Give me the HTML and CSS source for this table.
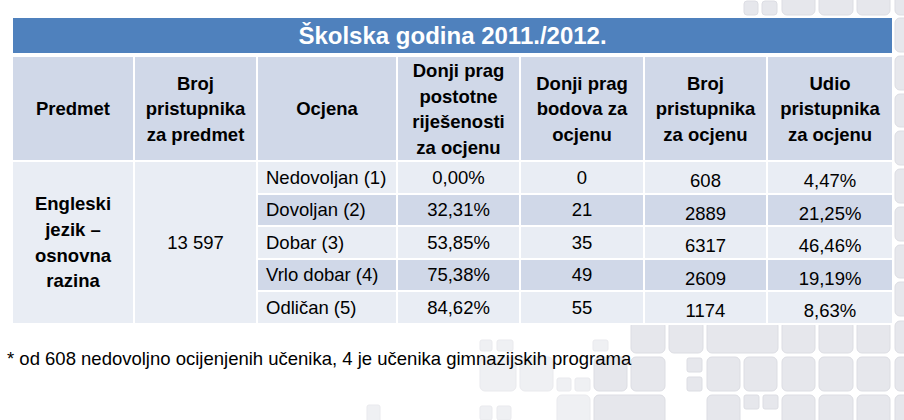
FILE: index.html
```html
<!DOCTYPE html>
<html lang="hr">
<head>
<meta charset="utf-8">
<title>Školska godina 2011./2012.</title>
<link rel="stylesheet" href="styles.css">
</head>
<body>
<div class="backdrop" aria-hidden="true">
  <svg width="904" height="420" viewBox="0 0 904 420">
    <g class="tiles">
      <rect x="744" y="1" width="14" height="14" rx="3"/>
      <rect x="762" y="1" width="15" height="14" rx="3"/>
      <rect x="782" y="-19" width="33" height="34" rx="5"/>
      <rect x="819" y="-19" width="34" height="34" rx="5"/>
      <rect x="857" y="-19" width="33" height="34" rx="5"/>
      <rect x="895" y="-19" width="33" height="34" rx="5"/>
      <rect x="895" y="18" width="33" height="34" rx="5"/>
      <rect x="895" y="56" width="33" height="34" rx="5"/>
      <rect x="895" y="94" width="33" height="33" rx="5"/>
      <rect x="895" y="131" width="33" height="34" rx="5"/>
      <rect x="895" y="169" width="33" height="34" rx="5"/>
      <rect x="895" y="207" width="33" height="34" rx="5"/>
      <rect x="895" y="245" width="33" height="33" rx="5"/>
      <rect x="895" y="282" width="33" height="34" rx="5"/>
      <!-- row A -->
      <rect class="faint" x="480" y="340" width="12" height="11" rx="2"/>
      <rect class="faint" x="497" y="340" width="16" height="11" rx="2"/>
      <rect class="faint" x="593" y="340" width="15" height="11" rx="2"/>
      <rect x="631" y="321" width="34" height="32" rx="5"/>
      <rect x="669" y="321" width="34" height="32" rx="5"/>
      <rect x="707" y="321" width="71" height="32" rx="5"/>
      <rect x="782" y="321" width="33" height="32" rx="5"/>
      <rect x="819" y="321" width="34" height="32" rx="5"/>
      <rect x="857" y="321" width="33" height="32" rx="5"/>
      <rect x="895" y="321" width="33" height="32" rx="5"/>
      <!-- row B -->
      <rect class="faint" x="480" y="357" width="36" height="34" rx="5"/>
      <rect class="faint" x="520" y="357" width="33" height="34" rx="5"/>
      <rect class="faint" x="557" y="378" width="14" height="13" rx="2"/>
      <rect class="faint" x="575" y="378" width="15" height="13" rx="2"/>
      <rect x="594" y="357" width="33" height="34" rx="5"/>
      <rect x="631" y="357" width="34" height="34" rx="5"/>
      <rect x="687" y="358" width="15" height="14" rx="2"/>
      <rect x="687" y="377" width="15" height="14" rx="2"/>
      <rect x="707" y="357" width="33" height="34" rx="5"/>
      <rect x="744" y="357" width="33" height="34" rx="5"/>
      <rect x="782" y="357" width="33" height="34" rx="5"/>
      <rect x="819" y="357" width="34" height="34" rx="5"/>
      <rect x="857" y="357" width="33" height="34" rx="5"/>
      <rect x="895" y="357" width="33" height="34" rx="5"/>
      <!-- row C -->
      <rect class="faint" x="367" y="405" width="13" height="20" rx="2"/>
      <rect class="faint" x="480" y="406" width="12" height="14" rx="2"/>
      <rect class="faint" x="497" y="406" width="14" height="14" rx="2"/>
      <rect class="faint" x="557" y="395" width="33" height="34" rx="5"/>
      <rect x="594" y="395" width="71" height="34" rx="5"/>
      <rect x="707" y="395" width="33" height="34" rx="5"/>
      <rect x="744" y="395" width="15" height="14" rx="2"/>
      <rect x="763" y="395" width="15" height="14" rx="2"/>
      <rect x="782" y="395" width="33" height="34" rx="5"/>
      <rect x="819" y="395" width="34" height="34" rx="5"/>
      <rect x="857" y="395" width="33" height="34" rx="5"/>
      <rect x="895" y="395" width="33" height="34" rx="5"/>
    </g>
  </svg>
</div>

<main class="page">
  <table class="results">
    <colgroup>
      <col class="c-subject">
      <col class="c-count">
      <col class="c-grade">
      <col class="c-pct">
      <col class="c-pts">
      <col class="c-num">
      <col class="c-share">
    </colgroup>
    <thead>
      <tr class="title-row">
        <th colspan="7" class="title">Školska godina 2011./2012.</th>
      </tr>
      <tr class="head-row">
        <th>Predmet</th>
        <th>Broj<br>pristupnika<br>za predmet</th>
        <th>Ocjena</th>
        <th>Donji prag<br>postotne<br>riješenosti<br>za ocjenu</th>
        <th>Donji prag<br>bodova za<br>ocjenu</th>
        <th>Broj<br>pristupnika<br>za ocjenu</th>
        <th class="last">Udio<br>pristupnika<br>za ocjenu</th>
      </tr>
    </thead>
    <tbody>
      <tr class="light">
        <td rowspan="5" class="subject">Engleski<br>jezik –<br>osnovna<br>razina</td>
        <td rowspan="5" class="count">13 597</td>
        <td class="grade">Nedovoljan (1)</td>
        <td>0,00%</td>
        <td>0</td>
        <td class="low">608</td>
        <td class="low last">4,47%</td>
      </tr>
      <tr class="dark">
        <td class="grade">Dovoljan (2)</td>
        <td>32,31%</td>
        <td>21</td>
        <td class="low">2889</td>
        <td class="low last">21,25%</td>
      </tr>
      <tr class="light">
        <td class="grade">Dobar (3)</td>
        <td>53,85%</td>
        <td>35</td>
        <td class="low">6317</td>
        <td class="low last">46,46%</td>
      </tr>
      <tr class="dark">
        <td class="grade">Vrlo dobar (4)</td>
        <td>75,38%</td>
        <td>49</td>
        <td class="low">2609</td>
        <td class="low last">19,19%</td>
      </tr>
      <tr class="light">
        <td class="grade">Odličan (5)</td>
        <td>84,62%</td>
        <td>55</td>
        <td class="low">1174</td>
        <td class="low last">8,63%</td>
      </tr>
    </tbody>
  </table>
  <p class="note">* od 608 nedovoljno ocijenjenih učenika, 4 je učenika gimnazijskih programa</p>
</main>
</body>
</html>
```

FILE: styles.css
```css
html, body {
  margin: 0;
  padding: 0;
  background: #ffffff;
}

body {
  width: 904px;
  height: 420px;
  overflow: hidden;
  position: relative;
  font-family: "Liberation Sans", Arial, sans-serif;
  color: #000;
}

.backdrop {
  position: absolute;
  left: 0;
  top: 0;
  width: 904px;
  height: 420px;
  z-index: 0;
}

.backdrop svg {
  display: block;
}

.tiles rect {
  fill: #e6e7ec;
  stroke: #dcdde3;
  stroke-width: 1;
}

.tiles rect.faint {
  opacity: 0.6;
}

.page {
  position: relative;
  z-index: 1;
  padding: 18px 0 0 13px;
}

.results {
  border-collapse: separate;
  border-spacing: 0;
  table-layout: fixed;
  width: 879px;
  font-size: 18.5px;
}

.c-subject { width: 122px; }
.c-count { width: 123px; }
.c-grade { width: 140px; }
.c-pct { width: 123px; }
.c-pts { width: 124px; }
.c-num { width: 123px; }
.c-share { width: 124px; }

.results th,
.results td {
  padding: 0;
  border-right: 2px solid #fff;
  border-bottom: 2px solid #fff;
  text-align: center;
  vertical-align: middle;
  box-sizing: border-box;
}

.results .last {
  border-right: none;
}

.title-row {
  height: 39px;
}

.results th.title {
  background: #4f81bd;
  color: #fff;
  font-size: 24px;
  font-weight: bold;
  border-right: none;
  border-bottom: 4px solid #fff;
  padding-top: 1px;
}

.head-row {
  height: 102px;
}

.head-row th {
  background: #d0d8e8;
  font-weight: bold;
  line-height: 25.5px;
  padding-top: 1px;
}

.results td {
  background: #e9edf4;
  line-height: 22px;
}

.light {
  height: 33px;
}

.dark {
  height: 32px;
}

.dark td {
  background: #d0d8e8;
}

.results td.subject {
  font-weight: bold;
  line-height: 25.7px;
  background: #e9edf4;
}

.results td.count {
  background: #e9edf4;
}

.results td.grade {
  text-align: left;
  padding-left: 8px;
}

.results td.low {
  padding-top: 7px;
}

.note {
  margin: 23px 0 0 -6px;
  font-size: 18.5px;
  line-height: 22px;
}
```
